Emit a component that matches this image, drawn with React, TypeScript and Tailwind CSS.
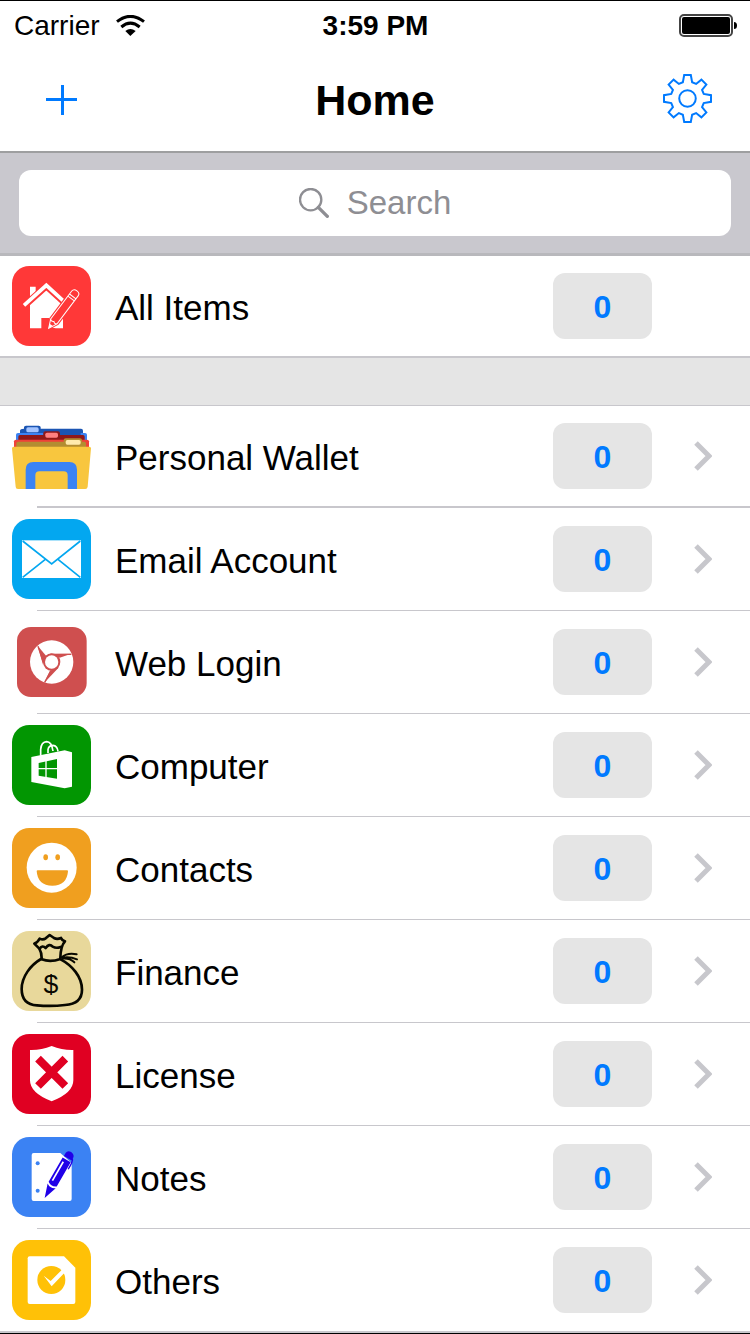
import type { ReactNode } from 'react'

type Category = {
    label: string
    count: number
    icon: ReactNode
}

const Tile: React.FC<{ color?: string; children: ReactNode }> = ({ color, children }) => {
    return (
        <svg className="h-20 w-[79px] shrink-0" viewBox="0 0 237 240" fill="none" aria-hidden="true">
            {color && <rect width="237" height="240" rx="52" fill={color} />}
            {children}
        </svg>
    )
}

const HouseIcon = () => (
    <Tile color="#ff3838">
        <path d="M54 62h17v22L54 99Z" fill="#fff" />
        <path d="M54 187V113L103 70l50 44v73h-22l-19-4V156H88v31Z" fill="#fff" />
        <path d="M36 120L103 60l57 52" stroke="#ff3838" strokeWidth="20" />
        <path d="M36 118L103 58l56 51" stroke="#fff" strokeWidth="11" />
        <g transform="translate(110 187) rotate(37)">
            <path
                d="M0 0L-13-27V-131q0-11 13-11t13 11V-27Z"
                fill="#ff3838"
                stroke="#ff3838"
                strokeWidth="8"
            />
            <path
                d="M0 0L-12-26V-131q0-10 12-10t12 10V-26ZM-12-112H12M-12-120H12M-12-26q6 6 12 0q6 6 12 0"
                stroke="#fff"
                strokeWidth="3"
            />
            <path d="M0 0L-6-13H6Z" fill="#fff" />
        </g>
    </Tile>
)

const FolderIcon = () => (
    <Tile>
        <path d="M24 54V44q0-6 12-6V34q0-5 6-5H80q6 0 6 5v4H207q6 0 6 6V58H24Z" fill="#1b55b3" />
        <rect x="43" y="34" width="37" height="15" rx="5" fill="#a3c3ff" />
        <path d="M12 72V56q0-5 6-5H94v6H206V51h13q6 0 6 5v16Z" fill="#3b83f4" />
        <path d="M19 74V62q0-5 5-5H94V52q0-6 6-6h38q6 0 6 6v5h69q5 0 5 5v12Z" fill="#901818" />
        <rect x="100" y="50" width="38" height="15" rx="5" fill="#ff8080" />
        <path d="M6 94V76q0-5 6-5H225q6 0 6 5v18Z" fill="#ee4238" />
        <path d="M13 94V82q0-5 6-5H155V73q0-6 6-6h43q6 0 6 6v4h7q5 0 5 5v12Z" fill="#b38d31" />
        <rect x="161" y="72" width="45" height="14" rx="5" fill="#ffeaad" />
        <path d="M5 92H232q5 0 5 5L227 212q-1 7-7 7H18q-7 0-7-7L0 97q0-5 5-5Z" fill="#f8c63e" />
        <path d="M41 219V161q0-23 23-23H172q23 0 23 23V219H167V178q0-12-12-12H82q-12 0-12 12V219Z" fill="#3b83f4" />
    </Tile>
)

const MailIcon = () => (
    <Tile color="#03a7f0">
        <rect x="30" y="64" width="177" height="113" fill="#fff" />
        <path d="M32 66L119 135L205 66M100 121L32 175M138 121L205 175" stroke="#03a7f0" strokeWidth="5" />
    </Tile>
)

const BrowserIcon = () => (
    <Tile>
        <rect x="15" y="15" width="209" height="210" rx="42" fill="#cf4f4f" />
        <circle cx="119" cy="120" r="65" fill="#fff" />
        <path d="M178 95L112 96L143 107Z" fill="#cf4f4f" />
        <path d="M77 71L93 128L102 101Z" fill="#cf4f4f" />
        <path d="M97 182L141 136L114 146Z" fill="#cf4f4f" />
        <path d="M178 97H114M78 73L94 121M98 181L117 146" stroke="#cf4f4f" strokeWidth="4" />
        <circle cx="119" cy="120" r="26" fill="#cf4f4f" />
        <circle cx="119" cy="120" r="20" fill="#fff" />
    </Tile>
)

const StoreIcon = () => (
    <Tile color="#029602">
        <path d="M86 92V73q2-22 18-23q15 0 19 28" stroke="#fff" strokeWidth="5" />
        <path d="M108 84V74q2-13 15-13q13 1 15 18" stroke="#fff" strokeWidth="5" />
        <path d="M58 96L158 76L180 82V185L158 190L58 171Z" fill="#fff" />
        <path d="M80 114L135 102V161L80 152Z" fill="#029602" />
        <path d="M102 106V160M78 131H137" stroke="#fff" strokeWidth="4" />
    </Tile>
)

const SmileIcon = () => (
    <Tile color="#f09f1f">
        <circle cx="119" cy="119" r="75" fill="#fff" />
        <ellipse cx="101" cy="88" rx="7" ry="9" fill="#f09f1f" />
        <ellipse cx="137" cy="88" rx="7" ry="9" fill="#f09f1f" />
        <path d="M74 129q0-2 3-2h88q3 0 3 2q-3 44-47 44t-47-44Z" fill="#f09f1f" />
    </Tile>
)

const MoneyBagIcon = () => (
    <Tile color="#e8d89b">
        <g stroke="#080800" strokeWidth="8" strokeLinejoin="round" strokeLinecap="round">
            <path d="M87 84C56 102 29 137 29 174Q29 221 75 223Q117 227 159 222Q210 218 210 176C210 137 180 103 146 85" />
            <path d="M89 85Q115 95 145 84M89 81Q89 65 82 53L67 38Q76 36 83 23Q93 28 101 22L113 12L126 21Q135 26 147 21Q150 29 159 31Q146 44 145 81" />
            <path d="M83 53Q91 41 101 51Q112 36 122 47Q133 53 146 48" />
            <path d="M149 79Q166 64 194 70M150 80Q174 76 195 85M151 83Q173 81 187 94" strokeWidth="6" />
        </g>
        <text
            x="117"
            y="186"
            textAnchor="middle"
            fill="#080800"
            fontFamily="Liberation Sans, Arial, sans-serif"
            fontSize="80"
        >
            $
        </text>
    </Tile>
)

const ShieldIcon = () => (
    <Tile color="#e00022">
        <path d="M119 36Q151 49 184 48V139Q184 177 119 202Q54 177 54 139V48Q87 49 119 36Z" fill="#fff" />
        <path d="M78 74L160 156M160 74L78 156" stroke="#e00022" strokeWidth="24" />
    </Tile>
)

const NotesIcon = () => (
    <Tile color="#3b82f3">
        <path d="M65 48H145L179 78V186q0 6-6 6H65q-6 0-6-6V54q0-6 6-6Z" fill="#fff" />
        <circle cx="77" cy="79" r="6" fill="#3b82f3" />
        <circle cx="77" cy="161" r="6" fill="#3b82f3" />
        <g transform="translate(98 183) rotate(30)">
            <path d="M0 0L-14-42Q0-32 14-42ZM-14-48V-132H14V-48Q0-38-14-48ZM-13-138V-149Q-12-159 0-159Q14-157 14-146V-138Z" fill="#2000e8" />
            <path d="M-6-57V-122" stroke="#fff" strokeWidth="5" />
            <path d="M13-144Q19-138 18-110" stroke="#2000e8" strokeWidth="4" />
        </g>
    </Tile>
)

const ChecklistIcon = () => (
    <Tile color="#ffc107">
        <path d="M53 49H156L190 83V186q0 6-6 6H53q-6 0-6-6V55q0-6 6-6Z" fill="#fff" />
        <circle cx="118" cy="120" r="42" fill="#ffc107" />
        <path d="M95 107L116 123L151 88L159 97L119 139Z" fill="#fff" />
    </Tile>
)

const categories: Category[] = [
    { label: 'Personal Wallet', count: 0, icon: <FolderIcon /> },
    { label: 'Email Account', count: 0, icon: <MailIcon /> },
    { label: 'Web Login', count: 0, icon: <BrowserIcon /> },
    { label: 'Computer', count: 0, icon: <StoreIcon /> },
    { label: 'Contacts', count: 0, icon: <SmileIcon /> },
    { label: 'Finance', count: 0, icon: <MoneyBagIcon /> },
    { label: 'License', count: 0, icon: <ShieldIcon /> },
    { label: 'Notes', count: 0, icon: <NotesIcon /> },
    { label: 'Others', count: 0, icon: <ChecklistIcon /> },
]

const Row: React.FC<Category & { chevron?: boolean }> = ({ label, count, icon, chevron }) => {
    return (
        <button type="button" className="flex w-full flex-1 items-center pl-3 text-left">
            {icon}
            <span className="ml-6 flex-1 pt-1 text-[35px] leading-10">{label}</span>
            <span className="flex h-[66px] w-[99px] items-center justify-center rounded-xl bg-[#e5e5e5] pt-0.5 text-[32px] leading-9 font-bold text-[#007aff]">
                {count}
            </span>
            <span className="w-[98px] pl-[41px]">
                {chevron && (
                    <svg className="h-[30px] w-[19px]" viewBox="0 0 19 30" fill="none" aria-hidden="true">
                        <path d="M3 2L16 15L3 28" stroke="#c7c7cc" strokeWidth="5" />
                    </svg>
                )}
            </span>
        </button>
    )
}

const StatusBar = () => {
    return (
        <div className="grid h-12 grid-cols-3 items-center pr-[13px] pl-[14px] text-[28px] leading-8">
            <div className="flex items-center gap-4">
                <span className="pt-0.5">Carrier</span>
                <svg className="h-[21px] w-[29px]" viewBox="0 0 87 63" fill="none" aria-label="Wi-Fi">
                    <path d="M3 20Q43-12 84 20" stroke="#000" strokeWidth="9" />
                    <path d="M16 36Q43 13 71 36" stroke="#000" strokeWidth="9" />
                    <path d="M28 48Q43 36 59 48L43 63Z" fill="#000" />
                </svg>
            </div>
            <span className="pt-0.5 text-center font-bold">3:59 PM</span>
            <svg className="h-[23px] w-[58px] justify-self-end" viewBox="0 0 58 23" aria-label="Battery">
                <rect x="1" y="1" width="52" height="21" rx="4" fill="#fff" stroke="#444" strokeWidth="2" />
                <rect x="3" y="3" width="48" height="17" rx="2" />
                <path d="M55 8q3 0 3 3.500t-3 3.500Z" />
            </svg>
        </div>
    )
}

const NavBar = () => {
    return (
        <div className="grid h-[102px] grid-cols-3 items-center px-[38px]">
            <button type="button" aria-label="Add" className="justify-self-start px-2">
                <svg className="size-[31px]" viewBox="0 0 31 31" fill="none">
                    <path d="M0 14.500H31M16.500 0V30" stroke="#007aff" strokeWidth="3" />
                </svg>
            </button>
            <h1 className="text-center text-[43px] leading-[50px] font-bold">Home</h1>
            <button type="button" aria-label="Settings" className="justify-self-end pb-1">
                <svg className="size-[49px]" viewBox="-74 -74 148 148" fill="none" stroke="#007aff" strokeWidth="6">
                    <path d="M-10-71H10L14-49L26-44L42-57L57-42L44-26L49-14L71-10V10L49 14L44 26L57 42L42 57L26 44L14 49L10 71H-10L-14 49L-26 44L-42 57L-57 42L-44 26L-49 14L-71 10V-10L-49-14L-44-26L-57-42L-42-57L-26-44L-14-49Z" />
                    <circle r="25" />
                </svg>
            </button>
        </div>
    )
}

const SearchBar = () => {
    return (
        <div className="border-b-3 border-[#b8b8bc] bg-[#c9c8ce] px-[19px] py-[17px]">
            <label className="flex h-[66px] items-center justify-center gap-[18px] rounded-xl bg-white">
                <svg className="size-[30px]" viewBox="0 0 90 90" fill="none" aria-hidden="true">
                    <circle cx="35" cy="35" r="32" stroke="#8e8e93" strokeWidth="7" />
                    <path d="M58 58L85 85" stroke="#8e8e93" strokeWidth="10" strokeLinecap="round" />
                </svg>
                <input
                    type="search"
                    aria-label="Search"
                    placeholder="Search"
                    className="field-sizing-content text-[33px] leading-10 outline-none placeholder:text-[#8e8e93]"
                />
            </label>
        </div>
    )
}

const App = () => {
    return (
        <div className="border-y border-black bg-white font-['Liberation_Sans',Arial,sans-serif] text-black">
            <header className="border-b-2 border-[#9e9fa0]">
                <StatusBar />
                <NavBar />
            </header>

            <main>
                <SearchBar />

                <div className="flex h-[102px] border-b-2 border-[#c8c7cc]">
                    <Row label="All Items" count={0} icon={<HouseIcon />} />
                </div>

                <div className="h-12 border-b border-[#c8c7cc] bg-[#e5e5e5]" />

                <ul>
                    {categories.map((category) => (
                        <li
                            key={category.label}
                            className="group flex h-[103px] flex-col first:h-[102px] last:h-[104px]"
                        >
                            <Row {...category} chevron />
                            <div className="ml-[37px] h-px bg-[#c8c7cc] group-first:h-0.5 group-last:ml-0 group-last:h-0.5" />
                        </li>
                    ))}
                </ul>
            </main>
        </div>
    )
}

export default App
